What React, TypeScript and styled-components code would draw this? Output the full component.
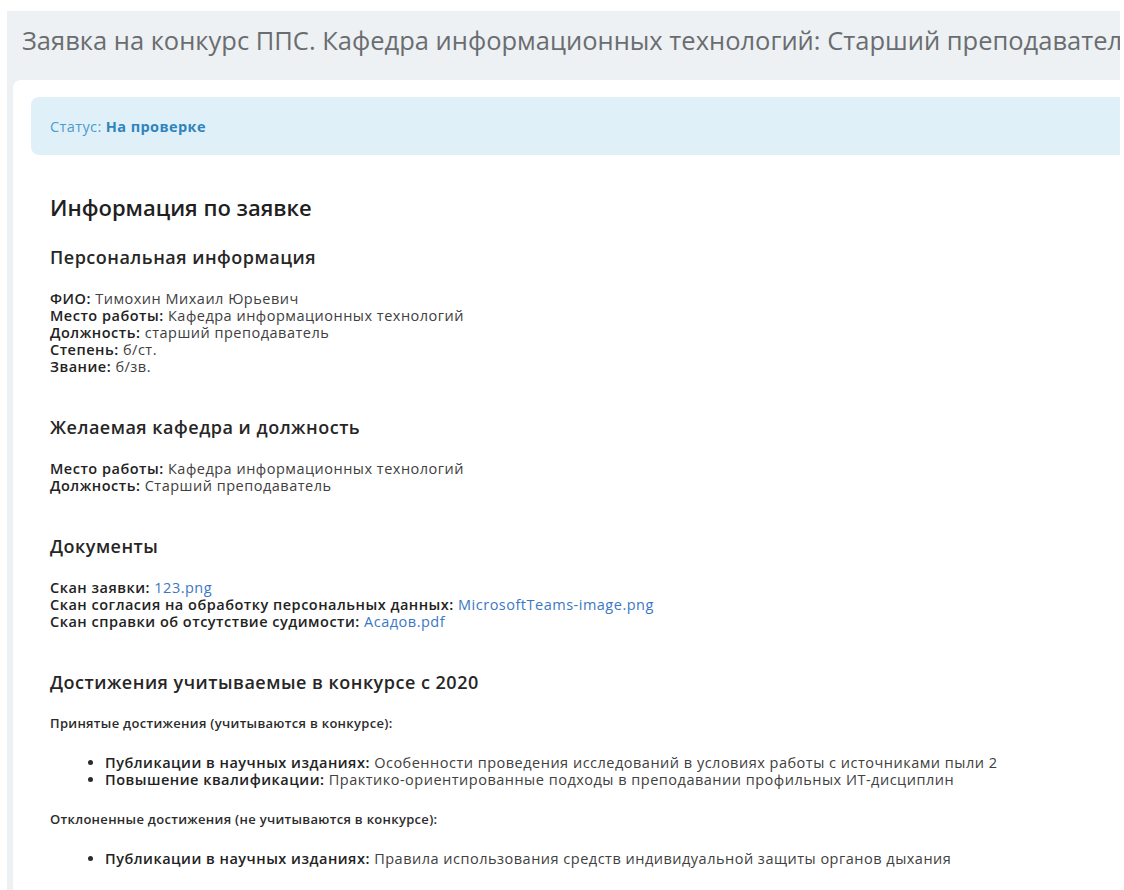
import React from "react";
import styled, { createGlobalStyle } from "styled-components";

const GlobalStyle = createGlobalStyle`
  html, body {
    margin: 0;
    padding: 0;
    background: #ffffff;
  }
  body {
    font-family: "Open Sans", "Noto Sans", sans-serif;
    color: #2b2b2b;
  }
`;

type Field = { label: string; value: string; link?: boolean };

const personal: Field[] = [
  { label: "ФИО:", value: "Тимохин Михаил Юрьевич" },
  { label: "Место работы:", value: "Кафедра информационных технологий" },
  { label: "Должность:", value: "старший преподаватель" },
  { label: "Степень:", value: "б/ст." },
  { label: "Звание:", value: "б/зв." },
];

const desired: Field[] = [
  { label: "Место работы:", value: "Кафедра информационных технологий" },
  { label: "Должность:", value: "Старший преподаватель" },
];

const documents: Field[] = [
  { label: "Скан заявки:", value: "123.png", link: true },
  {
    label: "Скан согласия на обработку персональных данных:",
    value: "MicrosoftTeams-image.png",
    link: true,
  },
  { label: "Скан справки об отсутствие судимости:", value: "Асадов.pdf", link: true },
];

const accepted: Field[] = [
  {
    label: "Публикации в научных изданиях:",
    value: "Особенности проведения исследований в условиях работы с источниками пыли 2",
  },
  {
    label: "Повышение квалификации:",
    value: "Практико-ориентированные подходы в преподавании профильных ИТ-дисциплин",
  },
];

const rejected: Field[] = [
  {
    label: "Публикации в научных изданиях:",
    value: "Правила использования средств индивидуальной защиты органов дыхания",
  },
];

const FieldLines = ({ items }: { items: Field[] }) => (
  <Lines>
    {items.map((f, i) => (
      <Line key={i}>
        <Label>{f.label}</Label> {f.link ? <FileLink href="#">{f.value}</FileLink> : <Value>{f.value}</Value>}
      </Line>
    ))}
  </Lines>
);

const Achievements = ({ items }: { items: Field[] }) => (
  <Bullets>
    {items.map((f, i) => (
      <Bullet key={i}>
        <Label>{f.label}</Label> <Value>{f.value}</Value>
      </Bullet>
    ))}
  </Bullets>
);

export default function App() {
  return (
    <>
      <GlobalStyle />
      <Page>
        <Frame>
          <Header>
            <Title>
              Заявка на конкурс ППС. Кафедра информационных технологий: Старший преподаватель
            </Title>
          </Header>
          <Card>
            <StatusBox>
              <StatusLabel>Статус:</StatusLabel>&nbsp;<StatusValue>На проверке</StatusValue>
            </StatusBox>
            <Content>
              <MainTitle>Информация по заявке</MainTitle>

              <SectionTitle>Персональная информация</SectionTitle>
              <FieldLines items={personal} />

              <SectionTitle>Желаемая кафедра и должность</SectionTitle>
              <FieldLines items={desired} />

              <SectionTitle>Документы</SectionTitle>
              <FieldLines items={documents} />

              <SectionTitle>Достижения учитываемые в конкурсе с 2020</SectionTitle>
              <GroupTitle>Принятые достижения (учитываются в конкурсе):</GroupTitle>
              <Achievements items={accepted} />
              <GroupTitle>Отклоненные достижения (не учитываются в конкурсе):</GroupTitle>
              <Achievements items={rejected} />
            </Content>
          </Card>
        </Frame>
      </Page>
    </>
  );
}

const Page = styled.div`
  padding: 11px 4px 0 7px;
  height: 879px;
  overflow: hidden;
`;

const Frame = styled.div`
  width: 1113px;
  height: 100%;
  background: #edf1f4;
  overflow: hidden;
`;

const Header = styled.header`
  height: 69px;
  padding: 12px 0 0 15px;
  box-sizing: border-box;
`;

/* long position names run past the frame and get clipped there */
const Title = styled.h1`
  margin: 0;
  font-size: 25.5px;
  line-height: 34px;
  font-weight: 400;
  color: #6a6d70;
  white-space: nowrap;
`;

const Card = styled.main`
  margin-left: 6px;
  width: 1200px;
  height: 100%;
  background: #ffffff;
  border-radius: 8px 0 0 0;
  padding: 17px 0 0 18px;
  box-sizing: border-box;
`;

const StatusBox = styled.div`
  height: 58px;
  display: flex;
  align-items: center;
  padding-left: 19px;
  background: #dff0f8;
  border-radius: 8px;
  font-size: 14.5px;
  letter-spacing: 0.4px;
`;

const StatusLabel = styled.span`
  color: #4c9ccc;
`;

const StatusValue = styled.span`
  color: #2f84bd;
  font-weight: 700;
`;

const Content = styled.section`
  padding: 40px 19px 0;
`;

const MainTitle = styled.h2`
  margin: 0 0 28px;
  font-size: 22px;
  line-height: 24px;
  font-weight: 600;
  color: #1f1f1f;
`;

const SectionTitle = styled.h3`
  margin: 0 0 23px;
  font-size: 18px;
  line-height: 20px;
  letter-spacing: 0.5px;
  font-weight: 600;
  color: #262626;
`;

const Lines = styled.div`
  margin-bottom: 42px;
  font-size: 14.5px;
  line-height: 17px;
  letter-spacing: 0.5px;
`;

const Line = styled.div``;

const Label = styled.span`
  font-weight: 600;
  color: #222222;
`;

const Value = styled.span`
  color: #404040;
`;

const FileLink = styled.a`
  color: #3b78c4;
  text-decoration: none;
`;

const GroupTitle = styled.p`
  margin: 0 0 22px;
  font-size: 13px;
  line-height: 17px;
  letter-spacing: 0.3px;
  font-weight: 600;
  color: #2b2b2b;
`;

const Bullets = styled.ul`
  margin: 0 0 23px;
  padding-left: 55px;
  font-size: 14.5px;
  line-height: 17px;
  letter-spacing: 0.5px;
  list-style: disc;
`;

const Bullet = styled.li``;
